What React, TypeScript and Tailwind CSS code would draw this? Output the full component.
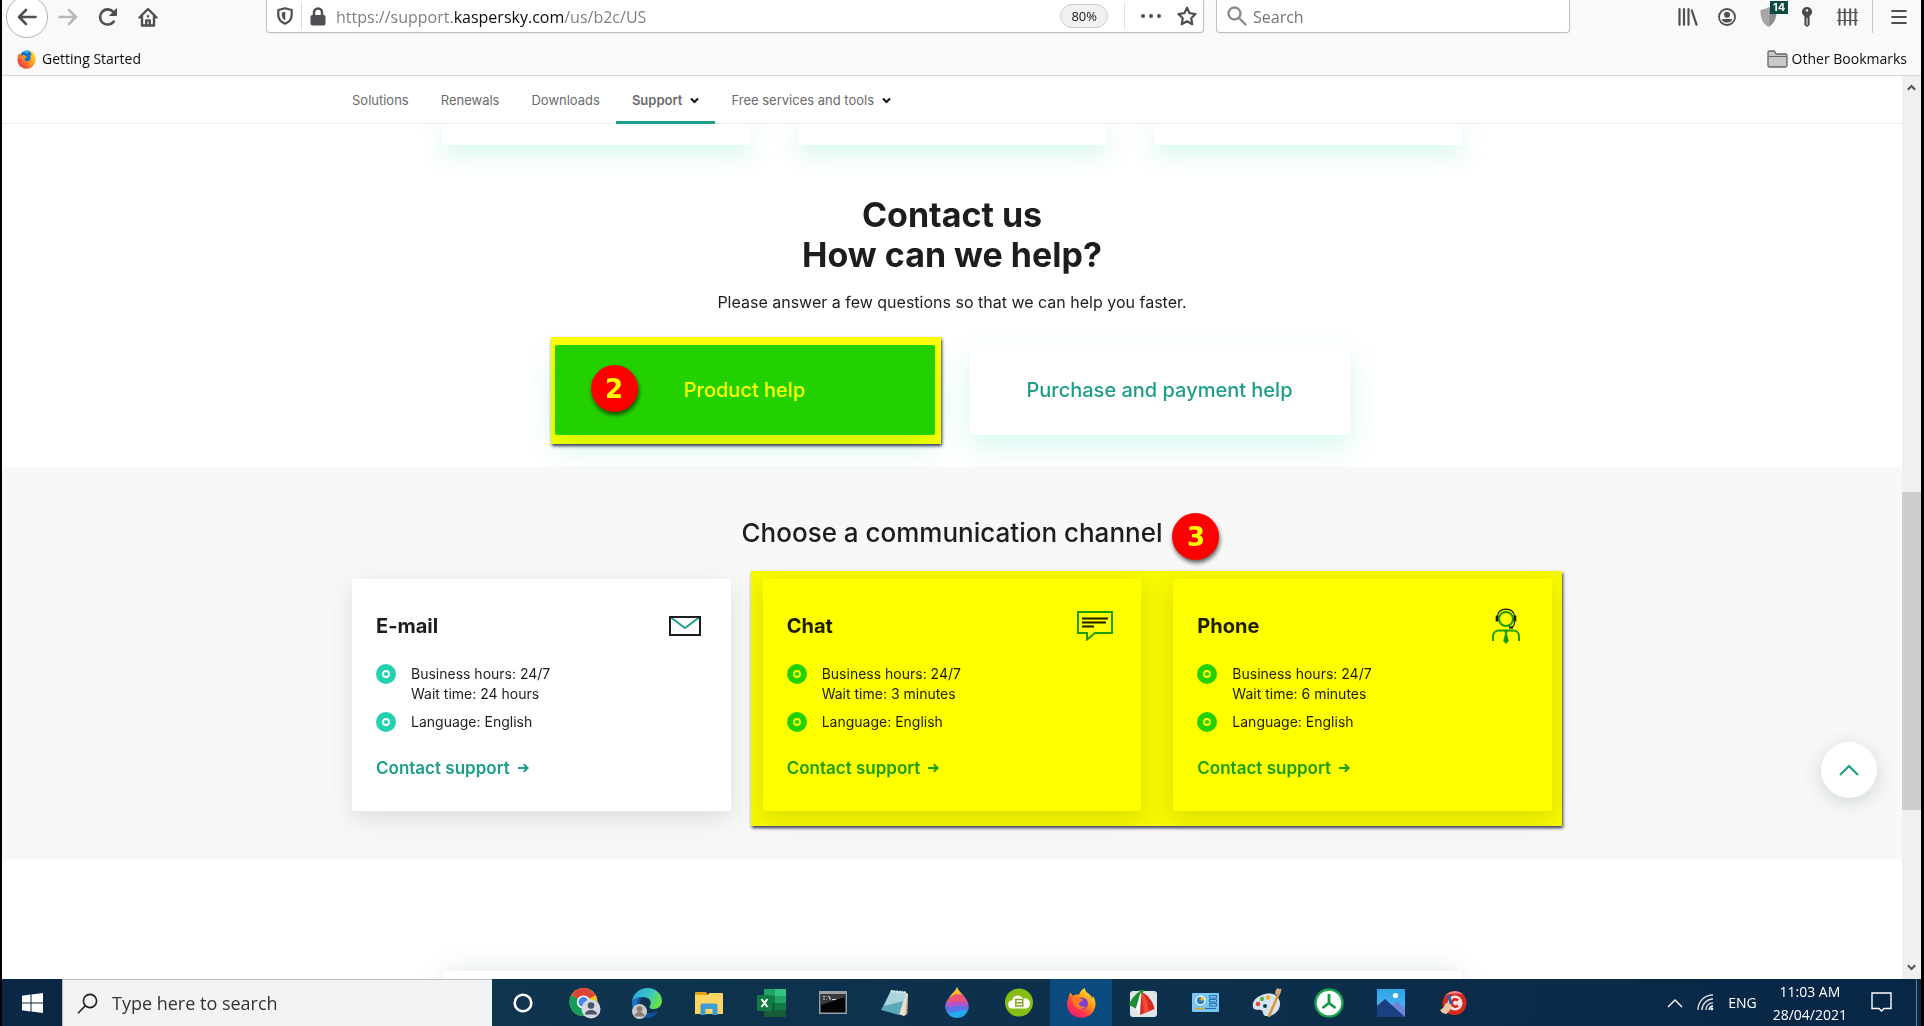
import React from "react";
import clsx from "clsx";

const navItems = [
  { label: "Solutions" },
  { label: "Renewals" },
  { label: "Downloads" },
  { label: "Support", active: true, menu: true },
  { label: "Free services and tools", menu: true },
];

const ui = "font-['Open_Sans','Noto_Sans',sans-serif]";

/* ---------- browser icons ---------- */

function BackIcon() {
  return (
    <svg width="20" height="18" viewBox="0 0 20 18" fill="none" stroke="currentColor" strokeWidth="2.6" strokeLinecap="round" strokeLinejoin="round">
      <path d="M9 2 2 9l7 7M2.500 9H18.500" />
    </svg>
  );
}

function ForwardIcon() {
  return (
    <svg width="20" height="18" viewBox="0 0 20 18" fill="none" stroke="currentColor" strokeWidth="2.600" strokeLinecap="round" strokeLinejoin="round">
      <path d="M11 2l7 7-7 7M17.500 9H1.500" />
    </svg>
  );
}

function ReloadIcon() {
  return (
    <svg width="20" height="20" viewBox="0 0 20 20" fill="none">
      <path d="M15.700 14.600A7.600 7.600 0 1 1 15.600 5.200" stroke="currentColor" strokeWidth="2.600" strokeLinecap="round" />
      <path d="M19 .8v7.400a.8.8 0 0 1-.8.8h-7.400z" fill="currentColor" />
    </svg>
  );
}

function HomeIcon() {
  return (
    <svg width="20" height="20" viewBox="0 0 20 20" fill="none" stroke="currentColor" strokeWidth="2.400" strokeLinejoin="round" strokeLinecap="round">
      <path d="M1.500 10.500 10 2l8.500 8.500M4 9.500V18.500H16V9.500" />
      <path d="M8.200 18v-4.600h3.600V18M10 9.200v.2" />
    </svg>
  );
}

function TrackingIcon() {
  return (
    <svg width="16" height="18" viewBox="0 0 16 18" fill="none" stroke="currentColor">
      <path d="M8 1.300 14.700 3v5c0 4-2.500 7-6.700 8.700C3.800 15 1.300 12 1.300 8V3z" strokeWidth="2.200" strokeLinejoin="round" />
      <path d="M8 5v8c-2-1.200-2.900-3-2.900-5V5.700z" fill="currentColor" strokeWidth=".6" />
    </svg>
  );
}

function LockIcon() {
  return (
    <svg width="16" height="19" viewBox="0 0 16 19" fill="none">
      <rect x=".5" y="8" width="15" height="10.500" rx="1.800" fill="currentColor" />
      <path d="M4 9V5.500a4 4 0 0 1 8 0V9" stroke="currentColor" strokeWidth="2.500" />
    </svg>
  );
}

function StarIcon() {
  return (
    <svg width="20" height="20" viewBox="0 0 20 20" fill="none" stroke="currentColor" strokeWidth="2.200" strokeLinejoin="round">
      <path d="m10 1.700 2.600 5.500 5.900.8-4.300 4.200 1.100 6L10 15.300l-5.300 2.900 1.100-6L1.500 8l5.900-.8z" />
    </svg>
  );
}

function SearchIcon() {
  return (
    <svg width="20" height="20" viewBox="0 0 20 20" fill="none" stroke="currentColor" strokeWidth="2.400" strokeLinecap="round">
      <circle cx="7.500" cy="7.500" r="6" />
      <path d="m12 12 6.500 6.500" />
    </svg>
  );
}

function LibraryIcon() {
  return (
    <svg width="20" height="18" viewBox="0 0 20 18" stroke="currentColor" strokeWidth="2.200" strokeLinecap="round">
      <path d="M1.500 1.200v15.600M6 1.200v15.600M10.500 1.200v15.600M13.800 2.500l4.700 14.200" />
    </svg>
  );
}

function AccountIcon() {
  return (
    <svg width="18" height="18" viewBox="0 0 18 18" fill="none">
      <circle cx="9" cy="9" r="8" stroke="currentColor" strokeWidth="1.800" />
      <circle cx="9" cy="6.800" r="3" fill="currentColor" />
      <path d="M4 11h10c0 2.400-2.500 3.600-5 3.600S4 13.400 4 11z" fill="currentColor" />
    </svg>
  );
}

function ShieldIcon() {
  return (
    <svg width="17" height="20" viewBox="0 0 17 20">
      <path d="M8.500 0C6 1.800 3 2.700.5 3c0 8 1.500 13 8 17z" fill="#a6a6a6" />
      <path d="M8.500 0C11 1.800 14 2.700 16.500 3c0 8-1.500 13-8 17z" fill="#8d8d8d" />
    </svg>
  );
}

function KeyIcon() {
  return (
    <svg width="12" height="20" viewBox="0 0 12 20">
      <path d="M6 0a5 5 0 0 1 2.600 9.300V18L6 20l-2.600-2V9.300A5 5 0 0 1 6 0z" fill="#4a4a4a" />
      <circle cx="6" cy="3.400" r="1.200" fill="#f9f9fa" />
      <path d="M6 11v7" stroke="#f9f9fa" strokeWidth="1" />
    </svg>
  );
}

function FenceIcon() {
  return (
    <svg width="21" height="18" viewBox="0 0 21 18" stroke="#555" strokeWidth="2" strokeLinecap="round">
      <path d="M2.500 1.200v15.600M7.800 1.200v15.600M13.200 1.200v15.600M18.500 1.200v15.600" />
      <path d="M.5 4.500h20M.5 12.500h20" strokeWidth="1.200" />
    </svg>
  );
}

function MenuIcon() {
  return (
    <svg width="16" height="16" viewBox="0 0 16 16" stroke="currentColor" strokeWidth="2.200" strokeLinecap="round">
      <path d="M1.200 2h13.600M1.200 8h13.600M1.200 14h13.600" />
    </svg>
  );
}

function FolderOutline() {
  return (
    <svg width="21" height="18" viewBox="0 0 21 18">
      <path d="M1 15.500V2.500A1.500 1.500 0 0 1 2.500 1h4.700l2 3h9.300A1.500 1.500 0 0 1 20 5.500v10a1.500 1.500 0 0 1-1.500 1.500h-16A1.500 1.500 0 0 1 1 15.500z" fill="#c8c8c8" stroke="#666" strokeWidth="1.300" />
      <path d="M1.500 6.500h18" stroke="#666" strokeWidth="1" />
    </svg>
  );
}

function OldFirefox() {
  return (
    <svg width="19" height="19" viewBox="0 0 20 20">
      <defs>
        <linearGradient id="offRed" x1="1" y1="0" x2="0" y2="1">
          <stop offset="0" stopColor="#fff044" />
          <stop offset=".45" stopColor="#ff9a1e" />
          <stop offset="1" stopColor="#f0144e" />
        </linearGradient>
      </defs>
      <circle cx="10.500" cy="8" r="7.500" fill="#1170c9" />
      <path d="M7 2c2-1.500 5-2 7-.6l-3 2.200z" fill="#2fb4f2" />
      <path d="M2 3.500 4.500 6c1.500-1 3-.8 3.800-.3L10.500 7c-.2 1.300-2 1-2.500 2.400C8 12 12 12.600 13.500 10.500c1.500-2 .7-4.500-.5-5.500 1 .2 1.800.8 2.300 1.500C15.500 4 14 1.500 12.500.5c5 1 7.500 5.500 7 10C19 16 15 19.800 10 19.800S.5 15.500.5 10.500C.5 8 1 5.500 2 3.500z" fill="url(#offRed)" />
    </svg>
  );
}

/* ---------- page icons ---------- */

function ChevronSmall() {
  return (
    <svg width="9" height="7" viewBox="0 0 9 7" fill="none" stroke="#111" strokeWidth="2">
      <path d="m1 1.500 3.500 3.500L8 1.500" />
    </svg>
  );
}

function ArrowRight() {
  return (
    <svg width="11" height="10" viewBox="0 0 11 10" fill="none" stroke="currentColor" strokeWidth="2">
      <path d="M0 5h9.500M5.800 1.200 9.600 5 5.800 8.800" />
    </svg>
  );
}

function MailIcon() {
  return (
    <svg width="32" height="20" viewBox="0 0 32 20" fill="none">
      <path d="m2 1.500 14 10.500L30 1.500" stroke="#1d9e88" strokeWidth="1.800" />
      <rect x="1" y="1" width="30" height="18" stroke="#1d1d1b" strokeWidth="2" />
    </svg>
  );
}

function ChatIcon() {
  return (
    <svg width="36" height="30" viewBox="0 0 36 30" fill="none">
      <path d="M1 1h34v21H18l-8 6.500V22H1z" stroke="#1d9e88" strokeWidth="2" />
      <path d="M5 7.500h26M5 11.500h24M5 15.500h12" stroke="#1d1d1b" strokeWidth="2" />
    </svg>
  );
}

function AgentIcon() {
  return (
    <svg width="28" height="36" viewBox="0 0 28 36" fill="none">
      <circle cx="14" cy="11" r="7" stroke="#1d9e88" strokeWidth="2" />
      <path d="M5.500 8.500C6 4 9 1.200 14 1.200S22 4 22.500 8.500" stroke="#1d1d1b" strokeWidth="1.200" />
      <path d="M5 7.500v6M23 7.500v6" stroke="#1d1d1b" strokeWidth="2.600" />
      <path d="M22.500 13.500c0 4-1.500 6-4 6" stroke="#1d1d1b" strokeWidth="1.200" />
      <path d="M17 19.500h4" stroke="#1d1d1b" strokeWidth="2.200" />
      <path d="M1 33v-4.500C1 25 3.500 22.500 7 22.500h14c3.500 0 6 2.500 6 6V33" stroke="#1d9e88" strokeWidth="2" />
      <path d="M12.300 23h3.400l-.7 3 1.800 7-2.800 3-2.800-3L13 26z" fill="#1d9e88" />
    </svg>
  );
}

const channels = [
  { title: "E-mail", wait: "24 hours", icon: <MailIcon /> },
  { title: "Chat", wait: "3 minutes", icon: <ChatIcon /> },
  { title: "Phone", wait: "6 minutes", icon: <AgentIcon /> },
];

/* ---------- taskbar icons ---------- */

function Cortana() {
  return (
    <svg width="20" height="20" viewBox="0 0 20 20" fill="none">
      <circle cx="10" cy="10" r="8.300" stroke="#fff" strokeWidth="2.600" />
    </svg>
  );
}

function Chrome() {
  return (
    <svg width="32" height="32" viewBox="0 0 32 32">
      <circle cx="14.500" cy="15" r="14" fill="#fbc02d" />
      <path d="M14.500 15 2.400 8A14 14 0 0 1 26.600 8z" fill="#dc4437" />
      <path d="M14.500 15 2.400 8a14 14 0 0 0 12.100 21l5-8z" fill="#109d58" />
      <circle cx="14.500" cy="15" r="6.600" fill="#fff" />
      <circle cx="14.500" cy="15" r="5.100" fill="#4a86e8" />
      <circle cx="22" cy="22" r="9.500" fill="#d5d8de" />
      <circle cx="22" cy="18.500" r="3.300" fill="#4a5568" />
      <path d="M16 27.500c0-6 12-6 12 0z" fill="#4a5568" />
    </svg>
  );
}

function Edge() {
  return (
    <svg width="32" height="32" viewBox="0 0 32 32">
      <defs>
        <linearGradient id="edgeTop" x1="0" y1="0" x2="1" y2=".4">
          <stop offset="0" stopColor="#2aa4e0" />
          <stop offset=".6" stopColor="#35c6c8" />
          <stop offset="1" stopColor="#6be04d" />
        </linearGradient>
      </defs>
      <path d="M1 15C2 6 9 1 16.500 1 25 1 31 7 31 14c0 5-4 8-8.500 8-3.500 0-5-1.500-3.500-3.500 2-3 0-8-6-8.500C7 9.500 2.500 12 1 15z" fill="url(#edgeTop)" />
      <path d="M1 15c1.500-3.500 6-5.500 11-5-5 1-7 5-6 10 1 5 5 9.500 10 11C7 31 .5 24 1 15z" fill="#1b75c9" />
      <path d="M12 10c-4 3-4 9 0 13 4 4 10 4 15 1-2.500 4-6 7-11 7C9 30 5 25 5.500 19 6 13 9 11 12 10z" fill="#12539c" />
      <circle cx="8.500" cy="24.500" r="7.500" fill="#cdcbc8" />
      <circle cx="8.500" cy="22" r="3" fill="#8d7f76" />
      <path d="M3.500 29.500c0-6 10-6 10 0z" fill="#8d7f76" />
    </svg>
  );
}

function Explorer() {
  return (
    <svg width="28" height="24" viewBox="0 0 28 24">
      <path d="M0 2a1 1 0 0 1 1-1h10l2 3H0z" fill="#e6a317" />
      <path d="M0 4h13l1-2h13a1 1 0 0 1 1 1v20H0z" fill="#fdd561" />
      <path d="M5.500 24V14.500a2 2 0 0 1 2-2h13a2 2 0 0 1 2 2V24h-5v-6h-7v6z" fill="#3f9bd8" />
    </svg>
  );
}

function Excel() {
  return (
    <svg width="29" height="28" viewBox="0 0 29 28">
      <path d="M7 0h11v7H7z" fill="#21a366" />
      <path d="M18 0h11v7H18z" fill="#33c481" />
      <path d="M7 7h11v7H7z" fill="#107c41" />
      <path d="M18 7h11v7H18z" fill="#21a366" />
      <path d="M7 14h11v7H7z" fill="#185c37" />
      <path d="M18 14h11v7H18z" fill="#107c41" />
      <path d="M7 21h22v7H7z" fill="#185c37" />
      <rect y="6" width="15" height="16" rx="1" fill="#107c41" />
      <path d="m4.500 10 6 8M10.500 10l-6 8" stroke="#fff" strokeWidth="2" />
    </svg>
  );
}

function Terminal() {
  return (
    <svg width="28" height="23" viewBox="0 0 28 23">
      <rect width="28" height="23" fill="#9ba1a6" />
      <rect x="1.500" y="3" width="25" height="18.500" fill="#050505" />
      <path d="M1.500 3h25v3L2 14z" fill="#3a3a3a" />
      <path d="M4 5.500h2M4 8h2M7.500 5.500v.5M7.500 8v.5M9.500 5l2 3.500M13 8.500h4" stroke="#ddd" strokeWidth="1.200" />
    </svg>
  );
}

function Notepad() {
  return (
    <svg width="28" height="28" viewBox="0 0 28 28">
      <path d="m24 3 3 2-1 20-3 2-6-2z" fill="#e8e0d2" />
      <path d="m26 5 .5 19-2 2.500z" fill="#c9a86a" />
      <path d="M10 1.500 25 3l-7 23L0 21z" fill="#5aa9b8" />
      <path d="M10 1.500 25 3l-2.500 9L3 17z" fill="#a9d5dc" />
      <path d="M10 2 25 3.500" stroke="#e6ecee" strokeWidth="2.200" strokeDasharray="1.600 1" />
    </svg>
  );
}

function Paint3D() {
  return (
    <svg width="24" height="31" viewBox="0 0 24 31">
      <defs>
        <clipPath id="drop">
          <path d="M12 0c2 6 11.500 11 11.500 19.500a11.500 11.500 0 0 1-23 0C.5 11 10 6 12 0z" />
        </clipPath>
      </defs>
      <g clipPath="url(#drop)">
        <path d="M0 0h24v31H0z" fill="#22a8ee" />
        <path d="M0 0h24v9L6 12z" fill="#fdbe1a" />
        <path d="M0 14 10 7l14 1v10l-12-3-12 1z" fill="#ee5478" />
        <path d="M0 13c7 6 13-3 24 4v5C13 14 9 24 0 19z" fill="#b653c8" />
        <path d="M0 18c8 6 13-3 24 3v3c-10-4-15 5-24 0z" fill="#5a74e6" />
      </g>
    </svg>
  );
}

function GreenCloud() {
  return (
    <svg width="28" height="29" viewBox="0 0 28 29">
      <circle cx="14" cy="14.500" r="14" fill="#86bc14" />
      <path d="M7.500 20.500a4 4 0 0 1-.5-8 6 6 0 0 1 11-2 5 5 0 0 1 3.500 10z" fill="#fff" />
      <path d="M10.800 11.500h7v6.500h-7zM10.800 14.800h7" fill="none" stroke="#86a014" strokeWidth="1.400" />
    </svg>
  );
}

function Firefox() {
  return (
    <svg width="29" height="30" viewBox="0 0 29 30">
      <defs>
        <linearGradient id="fxBody" x1=".85" y1="0" x2=".15" y2="1">
          <stop offset="0" stopColor="#fff44f" />
          <stop offset=".4" stopColor="#ff980e" />
          <stop offset=".7" stopColor="#ff3647" />
          <stop offset="1" stopColor="#e31587" />
        </linearGradient>
      </defs>
      <path d="M3.500 4.500 6 8c2-1.500 4-1.800 6-1.500C13 4 15 1 18 0c-.3 2.500 1.500 4.500 4 6 2 1.200 2.700 3 3 4.500l1-2.500c3 5 3.500 10 .5 15-2.500 4.500-7 6.800-12 6.800C6.500 29.800 0 24 0 16c0-2 .4-4 1.500-6 .2-2 .8-4 2-5.500z" fill="url(#fxBody)" />
      <circle cx="15" cy="15.500" r="6" fill="#7b3fd6" />
      <path d="M6 9c3-1.200 5 0 6.500 1.500 1.500.6 3 .6 4 .8-.5 1.800-2 2.200-3.500 2.700-1.500 1-1.500 3 .5 4 2 1 4 .8 5.500-.3-2 4-8 4.500-11 .8C5.500 15.500 5 12 6 9z" fill="#ff7a24" />
    </svg>
  );
}

function FastStone() {
  return (
    <svg width="29" height="28" viewBox="0 0 29 28">
      <rect x="1" y="2" width="27" height="26" rx="3" fill="#dfe4e6" />
      <path d="M12 2C6 5 2 10 0 16l7 3.500z" fill="#1c8e2f" />
      <path d="M12 3 7 19.500l4 6.500z" fill="#fff" />
      <path d="M12.500 3C19 6 24 12 25.500 20L11 26z" fill="#d9281e" />
      <path d="M12.500 3C17 8 19.500 15 19.500 22.500L15 24.300z" fill="#ee4a3a" />
      <path d="M9.500 1h6l-3 4z" fill="#1c8e2f" />
    </svg>
  );
}

function IdCard() {
  return (
    <svg width="27" height="19" viewBox="0 0 27 19">
      <rect width="27" height="19" rx="1" fill="#7cc7f1" />
      <circle cx="8.500" cy="7.500" r="5" fill="#fff" />
      <circle cx="8.500" cy="7.500" r="3.800" fill="#2f83c6" />
      <path d="M8.500 7.500V3.700a3.800 3.800 0 0 1 3.800 3.800z" fill="#f2b632" />
      <path d="M17.500 2.500h7v2.500h-7zM17.500 6.500h7V9h-7zM17.500 10.500h7V13h-7z" fill="none" stroke="#1f6fae" strokeWidth="1" />
      <path d="M3 15.500h9" stroke="#e8a020" strokeWidth="1.500" />
      <path d="M13 15.500h11" stroke="#1f6fae" strokeWidth="1.200" />
    </svg>
  );
}

function PaintIcon() {
  return (
    <svg width="30" height="30" viewBox="0 0 30 30">
      <path d="M13 6c9-2 15 3 15 10S21 29 14 28c-4-.5-2-5-5-6-3-.8-7 1-8-3C-.5 13 5 8 13 6z" fill="#d6e4f0" />
      <circle cx="6" cy="16" r="2.200" fill="#e0473b" />
      <circle cx="10" cy="11" r="2.200" fill="#5fb548" />
      <circle cx="16" cy="9.500" r="2.200" fill="#f0b12e" />
      <circle cx="13" cy="18" r="2" fill="#163a57" />
      <path d="M27 5 17 28" stroke="#e0953a" strokeWidth="2.600" strokeLinecap="round" />
      <path d="M23.500 6.500c-1-2 0-4.500 2-6.500 1.500 1.500 3 .5 4 1-.5 3-1.500 5.500-3 6.500z" fill="#d7a97a" />
    </svg>
  );
}

function GreenDial() {
  return (
    <svg width="30" height="30" viewBox="0 0 30 30" fill="none">
      <circle cx="15" cy="15" r="13.500" fill="#fff" stroke="#16a44c" strokeWidth="2.400" />
      <path d="M15 6v9l6.500 5M15 15l-6.500 5" stroke="#12994a" strokeWidth="2.800" />
    </svg>
  );
}

function Photos() {
  return (
    <svg width="28" height="28" viewBox="0 0 28 28">
      <defs>
        <linearGradient id="sky" x1="0" y1="0" x2="0" y2="1">
          <stop offset="0" stopColor="#2aa7e8" />
          <stop offset="1" stopColor="#5fb6f0" />
        </linearGradient>
      </defs>
      <path d="M0 0h28v28H0z" fill="url(#sky)" />
      <path d="M11 20 20 12l8 7v9H11z" fill="#6f86d8" />
      <path d="M0 17 8 10l20 18H0z" fill="#1c3f80" />
      <circle cx="18.500" cy="6.500" r="2.600" fill="#fff" />
    </svg>
  );
}

function CCleaner() {
  return (
    <svg width="28" height="28" viewBox="0 0 28 28" fill="none">
      <circle cx="15.500" cy="14" r="12" fill="#d8291f" />
      <path d="M6 7a12 12 0 0 1 18-1.500C18 4 11 4 6 7z" fill="#f08a80" />
      <circle cx="16" cy="14" r="7.500" fill="#f3e3e1" />
      <path d="M19 11.500a3.600 3.600 0 1 0 0 5" stroke="#d8291f" strokeWidth="2.600" />
      <path d="m9.500 6 2.500 9" stroke="#2f5fa8" strokeWidth="3" />
      <path d="M6.500 14.500c2-1 4.500 0 5.500 2 0 3.500-1.500 6-4.500 8.500-2.500 0-5-1.500-6.500-4 2.500-1 4.500-3.500 5.500-6.500z" fill="#f0c79a" />
    </svg>
  );
}

const apps = [
  { name: "Cortana", icon: <Cortana /> },
  { name: "Google Chrome", icon: <Chrome /> },
  { name: "Microsoft Edge", icon: <Edge /> },
  { name: "File Explorer", icon: <Explorer /> },
  { name: "Excel", icon: <Excel /> },
  { name: "Command Prompt", icon: <Terminal /> },
  { name: "Notepad", icon: <Notepad /> },
  { name: "Paint 3D", icon: <Paint3D /> },
  { name: "Cloud backup", icon: <GreenCloud /> },
  { name: "Firefox", icon: <Firefox />, active: true },
  { name: "Image viewer", icon: <FastStone /> },
  { name: "Control panel", icon: <IdCard /> },
  { name: "Paint", icon: <PaintIcon /> },
  { name: "Timer", icon: <GreenDial /> },
  { name: "Photos", icon: <Photos /> },
  { name: "CCleaner", icon: <CCleaner /> },
];

/* ---------- sections ---------- */

function BrowserBar() {
  return (
    <header className={clsx(ui, "border-b border-[#d9d9db] bg-[#f9f9fa] text-[#4f4f53]")}>
      <div className="flex h-[33px] items-center">
        <button aria-label="Back" className="ml-1 flex size-[42px] shrink-0 items-center justify-center rounded-full border border-[#b5b5b7] bg-white">
          <BackIcon />
        </button>
        <button aria-label="Forward" className="ml-2.5 text-[#b8b8ba]">
          <ForwardIcon />
        </button>
        <button aria-label="Reload" className="ml-5">
          <ReloadIcon />
        </button>
        <button aria-label="Home" className="ml-5">
          <HomeIcon />
        </button>
        <div className="ml-[108px] flex h-full flex-1 items-center rounded-b-sm border border-t-0 border-[#bfbfc1] bg-white pr-1.5 pl-2.5 shadow-xs">
          <TrackingIcon />
          <span className="mx-2 h-7 w-px bg-[#dedede]" />
          <LockIcon />
          <input
            aria-label="Address"
            defaultValue="https://support.kaspersky.com/us/b2c/US"
            className="ml-2.5 h-full flex-1 bg-[linear-gradient(90deg,#7b7b7d_0_119px,#0c0c0d_119px_228px,#7b7b7d_228px)] bg-clip-text pt-0.5 text-base text-transparent outline-none"
          />
          <button className="rounded-full border border-[#d0d0d2] bg-[#f1f1f2] px-2.5 text-[13px] leading-[22px] text-[#1a1a1a]">80%</button>
          <span className="mx-4 h-7 w-px bg-[#e4e4e4]" />
          <button aria-label="Page actions" className="flex gap-1">
            <span className="size-1 rounded-full bg-[#4f4f53]" />
            <span className="size-1 rounded-full bg-[#4f4f53]" />
            <span className="size-1 rounded-full bg-[#4f4f53]" />
          </button>
          <button aria-label="Bookmark this page" className="ml-4">
            <StarIcon />
          </button>
        </div>
        <label className="ml-3 flex h-full w-[354px] items-center rounded-b-sm border border-t-0 border-[#bfbfc1] bg-white pl-2.5 shadow-xs">
          <span className="text-[#8a8a8c]">
            <SearchIcon />
          </span>
          <input placeholder="Search" aria-label="Search" className="ml-1.5 h-full flex-1 pt-0.5 text-base outline-none placeholder:text-[#757577]" />
        </label>
        <div className="ml-[108px] flex h-full items-center">
          <button aria-label="Library">
            <LibraryIcon />
          </button>
          <button aria-label="Account" className="ml-5">
            <AccountIcon />
          </button>
          <button aria-label="Protection" className="relative ml-6">
            <ShieldIcon />
            <span className="absolute -top-1.5 left-2.5 bg-[#0c4a42] px-[3px] font-['Inter',sans-serif] text-[11px] leading-[13px] font-bold text-white">14</span>
          </button>
          <button aria-label="Key" className="ml-6">
            <KeyIcon />
          </button>
          <button aria-label="Fence" className="ml-6">
            <FenceIcon />
          </button>
          <span className="ml-3.5 h-full w-px bg-[#c9c9cb]" />
          <button aria-label="Menu" className="mr-3.5 ml-[18px]">
            <MenuIcon />
          </button>
        </div>
      </div>
      <div className="mt-2.5 flex h-8 items-center justify-between pr-3.5 pl-[15px] text-sm text-[#0c0c0d]">
        <a href="#" className="flex items-center gap-1.5">
          <OldFirefox />
          Getting Started
        </a>
        <a href="#" className="flex items-center gap-1">
          <FolderOutline />
          Other Bookmarks
        </a>
      </div>
    </header>
  );
}

function Badge({ children, className }: { children: React.ReactNode; className: string }) {
  return (
    <span
      className={clsx(
        "absolute flex size-[47px] items-center justify-center rounded-full bg-[#ff0000] font-['DejaVu_Sans',sans-serif] text-[26px] leading-8 font-bold text-[#ffff00] shadow-[1px_3px_4px_rgba(0,0,0,0.6)]",
        className
      )}
    >
      {children}
    </span>
  );
}

function Highlight({ className }: { className: string }) {
  return (
    <span
      className={clsx(
        "pointer-events-none absolute bg-[#ffff00] mix-blend-multiply shadow-[1px_2px_3px_rgba(0,0,40,0.8)]",
        className
      )}
    />
  );
}

function ChannelCard({ title, wait, icon }: { title: string; wait: string; icon: React.ReactNode }) {
  return (
    <article className="rounded-xs bg-white px-6 pt-[33px] pb-[31px] shadow-[0_8px_24px_rgba(40,70,90,0.14)]">
      <div className="flex h-7 items-center justify-between pr-0.5">
        <h3 className="text-xl leading-7 font-bold">{title}</h3>
        <span className="flex w-10 justify-center">{icon}</span>
      </div>
      <ul className="mt-6 flex flex-col gap-2 text-sm leading-5">
        <li className="flex gap-[15px]">
          <Bullet />
          <span>
            Business hours: 24/7
            <br />
            Wait time: {wait}
          </span>
        </li>
        <li className="flex gap-[15px]">
          <Bullet />
          Language: English
        </li>
      </ul>
      <a href="#" className="mt-6 flex items-center gap-2 text-[17px] leading-6 font-semibold text-[#1d9e88]">
        Contact support
        <ArrowRight />
      </a>
    </article>
  );
}

function Bullet() {
  return (
    <svg width="20" height="20" viewBox="0 0 20 20" className="shrink-0">
      <circle cx="10" cy="10" r="10" fill="#23d1ae" />
      <circle cx="10" cy="10" r="3" fill="none" stroke="#fff" strokeWidth="1.800" />
    </svg>
  );
}

function Taskbar() {
  return (
    <footer className={clsx(ui, "flex h-[47px] shrink-0 bg-linear-to-r from-[#0f3750] via-[#0d304c] via-60% to-[#082646] text-white")}>
      <button aria-label="Start" className="flex w-[60px] items-center justify-center bg-[#0a2845]">
        <svg width="21" height="20" viewBox="0 0 21 20" fill="#fff">
          <path d="M0 2.800 8.500 1.600v7.900H0zM9.500 1.400 21 0v9.500H9.500zM0 10.500h8.500v7.900L0 17.200zM9.500 10.500H21V20L9.500 18.600z" />
        </svg>
      </button>
      <label className="flex w-[430px] items-center border-t border-l border-[#b9bcc0] bg-[#f2f3f5] pl-3.5 text-[#1f1f1f]">
        <svg width="21" height="21" viewBox="0 0 21 21" fill="none" stroke="currentColor" strokeWidth="1.600">
          <circle cx="13" cy="8" r="6.600" />
          <path d="m8.300 12.700-7.300 7.500" />
        </svg>
        <input placeholder="Type here to search" aria-label="Type here to search" className="ml-3.5 h-full flex-1 text-lg outline-none placeholder:text-[#333]" />
      </label>
      <nav className="flex">
        {apps.map((app) => (
          <button key={app.name} aria-label={app.name} className={clsx("flex w-[62px] items-center justify-center", app.active && "bg-[#0b4a7d]")}>
            {app.icon}
          </button>
        ))}
      </nav>
      <div className="ml-auto flex items-center text-sm">
        <svg width="16" height="10" viewBox="0 0 16 10" fill="none" stroke="#fff" strokeWidth="1.400">
          <path d="m1 9 7-7 7 7" />
        </svg>
        <svg width="17" height="17" viewBox="0 0 17 17" fill="none" stroke="#fff" strokeWidth="1.300" className="ml-3.5">
          <path d="M1 16C1 7.500 7.500 1 16 1M5 16c0-6 5-11 11-11M8.800 16c0-4 3.200-7.200 7.200-7.200" opacity=".85" />
          <path d="M12 16c0-2.200 1.800-4 4-4" />
          <circle cx="14.800" cy="14.800" r="1.500" fill="#fff" stroke="none" />
        </svg>
        <span className="ml-3.5">ENG</span>
        <div className="ml-4 text-center leading-[23px]">
          <div>11:03 AM</div>
          <div>28/04/2021</div>
        </div>
        <svg width="21" height="21" viewBox="0 0 21 21" fill="none" stroke="#fff" strokeWidth="1.400" className="ml-6">
          <path d="M1 1h19v15.500h-7L10.500 19 8 16.500H1z" />
        </svg>
        <span className="mr-1 ml-6 h-full w-px bg-[#6b7f93]" />
      </div>
    </footer>
  );
}

export default function App() {
  return (
    <div className="flex h-screen flex-col overflow-hidden border-r-[3px] border-l-2 border-black bg-white">
      <BrowserBar />
      <div className="flex min-h-0 flex-1">
        <main className="relative min-w-0 flex-1 overflow-hidden font-['Inter',sans-serif] text-[#1d1d1b]">
          <nav className="relative z-10 border-b border-[#eeeeee] bg-white">
            <ul className="mx-auto flex h-[47px] max-w-[1232px] text-[13px] text-[#6b6b6b]">
              {navItems.map((item) => (
                <li key={item.label} className="flex">
                  <a
                    href="#"
                    className={clsx(
                      "-mb-px flex items-center gap-2 border-b-[3px] px-4 pt-1",
                      item.active ? "border-[#1d9e88] font-semibold" : "border-transparent"
                    )}
                  >
                    {item.label}
                    {item.menu && <ChevronSmall />}
                  </a>
                </li>
              ))}
            </ul>
          </nav>

          <section className="flex flex-col items-center pb-8 text-center">
            <div className="grid w-full max-w-[1019px] grid-cols-3 gap-[49px]">
              {[0, 1, 2].map((i) => (
                <div key={i} className="h-[21px] bg-white shadow-[0_8px_24px_rgba(35,209,174,0.22)]" />
              ))}
            </div>
            <h1 className="mt-[50px] text-[34px] leading-10 font-bold">
              Contact us
              <br />
              How can we help?
            </h1>
            <p className="mt-[15px] text-base leading-6">Please answer a few questions so that we can help you faster.</p>
            <div className="mt-[31px] grid w-full max-w-[795px] grid-cols-2 gap-[35px] text-xl font-medium">
              <div className="relative">
                <button className="h-[90px] w-full rounded-xs bg-[#23d1ae] text-white shadow-[0_12px_28px_rgba(35,209,174,0.22)]">Product help</button>
                <Highlight className="-top-2 -right-1.5 -bottom-[9px] -left-1" />
                <Badge className="top-5 left-9">2</Badge>
              </div>
              <button className="h-[90px] rounded-xs bg-white text-[#1d9e88] shadow-[0_12px_28px_rgba(35,209,174,0.18)]">Purchase and payment help</button>
            </div>
          </section>

          <section className="bg-[#f8f8f8] pt-[50px] pb-12">
            <h2 className="relative mx-auto w-fit text-[26px] leading-8 font-medium">
              Choose a communication channel
              <Badge className="-top-1 left-full ml-2.5">3</Badge>
            </h2>
            <div className="relative mx-auto mt-[30px] grid max-w-[1200px] grid-cols-3 gap-8">
              {channels.map((c) => (
                <ChannelCard key={c.title} {...c} />
              ))}
              <Highlight className="-top-2 -right-2.5 -bottom-[15px] left-[399px]" />
            </div>
          </section>

          <div className="mx-auto mt-28 h-40 max-w-[1019px] bg-white shadow-[0_0_24px_rgba(40,90,110,0.14)]" />

          <button
            aria-label="Back to top"
            className="absolute right-[25px] bottom-[181px] flex size-14 items-center justify-center rounded-full bg-white shadow-[0_4px_20px_rgba(40,70,90,0.2)]"
          >
            <svg width="20" height="12" viewBox="0 0 20 12" fill="none" stroke="#1d9e88" strokeWidth="2.200">
              <path d="m1 11 9-9 9 9" />
            </svg>
          </button>
        </main>

        <div className="flex w-[19px] flex-col items-center bg-[#f0f0f0] py-2">
          <svg width="9" height="7" viewBox="0 0 9 7" fill="none" stroke="#555" strokeWidth="2">
            <path d="M.8 5.800 4.500 2l3.700 3.800" />
          </svg>
          <div className="flex-[401]" />
          <div className="w-full flex-[318] bg-[#cdcdcd]" />
          <div className="flex-[154]" />
          <svg width="9" height="7" viewBox="0 0 9 7" fill="none" stroke="#555" strokeWidth="2">
            <path d="M.8 1.200 4.500 5l3.700-3.800" />
          </svg>
        </div>
      </div>
      <Taskbar />
    </div>
  );
}
